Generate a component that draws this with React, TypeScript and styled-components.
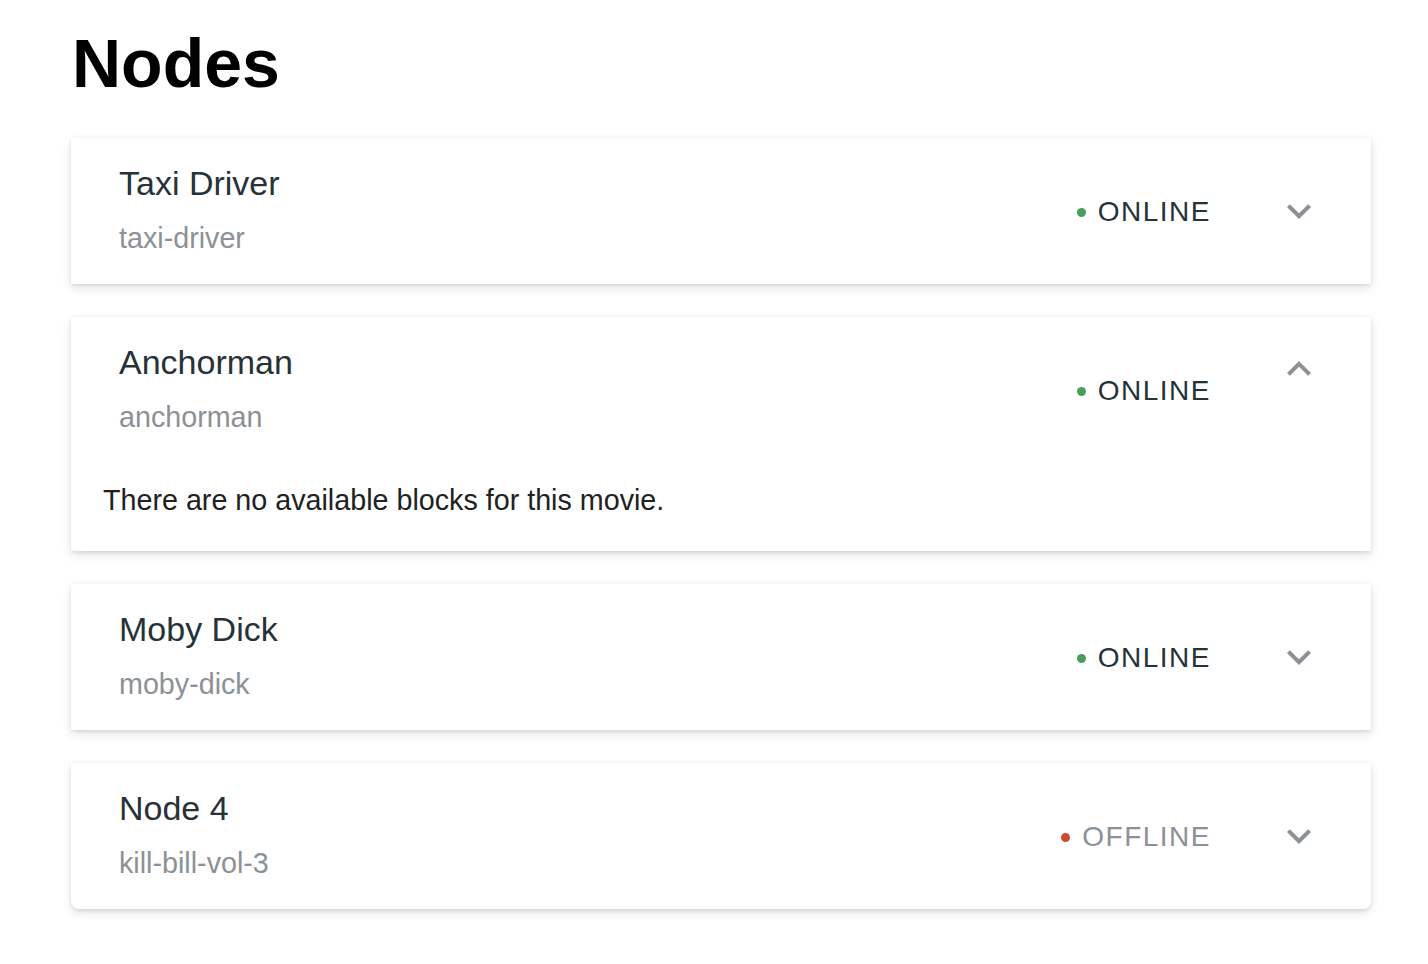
import React from "react";
import styled, { createGlobalStyle } from "styled-components";

const Global = createGlobalStyle`
  html, body { margin: 0; padding: 0; background: #ffffff; }
  body { font-family: "Liberation Sans", Arial, Helvetica, sans-serif; }
`;

const Page = styled.main`
  padding: 23px 57px 40px 71px;
`;

const Heading = styled.h1`
  margin: 0 0 35px 1px;
  font-size: 68px;
  line-height: 80px;
  font-weight: 700;
  color: #000;
`;

const List = styled.div`
  display: flex;
  flex-direction: column;
  gap: 33px;
`;

const Card = styled.section<{ $last?: boolean }>`
  background: #fff;
  border-radius: ${(p) => (p.$last ? "0 0 8px 8px" : "0")};
  box-shadow: 0 4px 10px rgba(0, 0, 0, 0.11), 0 2px 3px rgba(0, 0, 0, 0.06),
    0 0 4px rgba(0, 0, 0, 0.04);
`;

const Header = styled.div`
  display: flex;
  align-items: center;
  height: 146px;
  padding: 0 48px 2px 48px;
  box-sizing: border-box;
`;

const Titles = styled.div`
  flex: 1;
  display: flex;
  flex-direction: column;
  margin-top: -2px;
`;

const Title = styled.div`
  font-size: 34px;
  line-height: 40px;
  color: #263238;
`;

const Slug = styled.div`
  margin-top: 18px;
  font-size: 28.7px;
  line-height: 34px;
  color: #8b9196;
`;

const Status = styled.div<{ $online: boolean }>`
  display: flex;
  align-items: center;
  gap: 12px;
  font-size: 28px;
  line-height: 34px;
  letter-spacing: 1.5px;
  color: ${(p) => (p.$online ? "#263238" : "#8b9196")};
  margin: 4px 64px 0 0;
`;

const Dot = styled.span<{ $online: boolean }>`
  width: 9px;
  height: 9px;
  border-radius: 50%;
  background: ${(p) => (p.$online ? "#4a9e5c" : "#cc4b37")};
`;

const Toggle = styled.span<{ $open: boolean }>`
  display: flex;
  width: 48px;
  height: 48px;
  align-self: ${(p) => (p.$open ? "flex-start" : "center")};
  margin-top: ${(p) => (p.$open ? "28px" : "2px")};
  transform: ${(p) => (p.$open ? "rotate(180deg)" : "none")};
  color: #8b9196;
`;

const Body = styled.div`
  padding: 17px 32px 31px;
  font-size: 28.7px;
  line-height: 40px;
  color: #212121;
`;

const Chevron = () => (
  <svg width="48" height="48" viewBox="0 0 24 24" fill="currentColor">
    <path d="M16.59 8.59 12 13.17 7.41 8.59 6 10l6 6 6-6z" />
  </svg>
);

type Node = {
  name: string;
  slug: string;
  online: boolean;
  open?: boolean;
};

const nodes: Node[] = [
  { name: "Taxi Driver", slug: "taxi-driver", online: true },
  { name: "Anchorman", slug: "anchorman", online: true, open: true },
  { name: "Moby Dick", slug: "moby-dick", online: true },
  { name: "Node 4", slug: "kill-bill-vol-3", online: false },
];

export default function App() {
  return (
    <>
      <Global />
      <Page>
        <Heading>Nodes</Heading>
        <List>
          {nodes.map((n, i) => (
            <Card key={n.slug} $last={i === nodes.length - 1}>
              <Header>
                <Titles>
                  <Title>{n.name}</Title>
                  <Slug>{n.slug}</Slug>
                </Titles>
                <Status $online={n.online}>
                  <Dot $online={n.online} />
                  {n.online ? "ONLINE" : "OFFLINE"}
                </Status>
                <Toggle $open={!!n.open}>
                  <Chevron />
                </Toggle>
              </Header>
              {n.open && <Body>There are no available blocks for this movie.</Body>}
            </Card>
          ))}
        </List>
      </Page>
    </>
  );
}
